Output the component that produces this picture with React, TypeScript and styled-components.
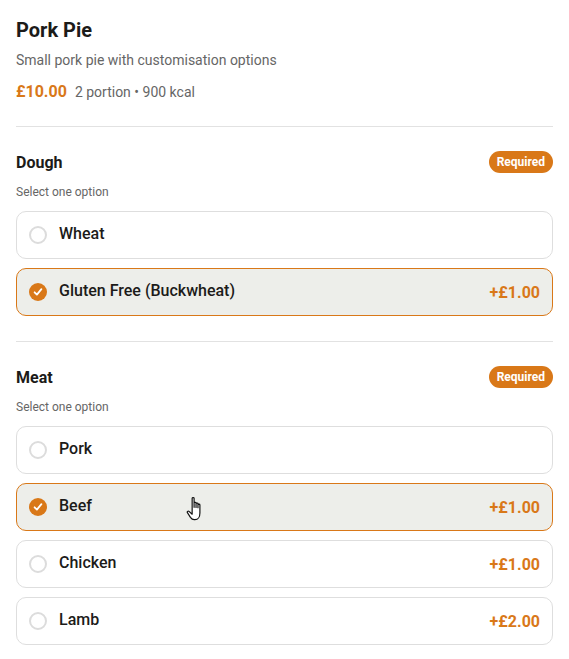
import styled, { createGlobalStyle } from "styled-components";

const GlobalStyle = createGlobalStyle`
   * { box-sizing: border-box; }
   body {
      margin: 0;
      background: #ffffff;
      font-family: Roboto, "Liberation Sans", sans-serif;
      color: #1c1b19;
   }
`;

const ORANGE = "#d97818";

const Page = styled.div`
   padding: 16px 16px 0;
`;

const Header = styled.header`
   padding-bottom: 22px;
   border-bottom: 1px solid #e2e2e2;
`;

const Title = styled.h1`
   margin: 0;
   font-size: 20px;
   line-height: 28px;
   font-weight: 700;
`;

const Subtitle = styled.p`
   margin: 6px 0 0;
   font-size: 14px;
   line-height: 20px;
   color: #666;
`;

const PriceRow = styled.div`
   margin-top: 10px;
   display: flex;
   align-items: baseline;
   gap: 8px;
   line-height: 24px;
   strong {
      font-size: 16px;
      font-weight: 700;
      color: ${ORANGE};
   }
   span {
      font-size: 14px;
      color: #666;
   }
`;

const Section = styled.section<{ $last?: boolean }>`
   padding: 24px 0 25px;
   border-bottom: ${({ $last }) => ($last ? "none" : "1px solid #e2e2e2")};
`;

const SectionHead = styled.div`
   display: flex;
   justify-content: space-between;
   align-items: center;
   height: 22px;
`;

const SectionTitle = styled.h2`
   margin: 0;
   font-size: 16px;
   font-weight: 700;
`;

const Badge = styled.span`
   background: ${ORANGE};
   color: #fff;
   font-size: 12px;
   font-weight: 700;
   line-height: 22px;
   padding: 0 8px;
   border-radius: 11px;
`;

const Hint = styled.p`
   margin: 11px 0 11px;
   font-size: 12px;
   line-height: 16px;
   color: #666;
`;

const Options = styled.div`
   display: flex;
   flex-direction: column;
   gap: 9px;
`;

const Option = styled.label<{ $selected?: boolean }>`
   position: relative;
   display: flex;
   align-items: center;
   gap: 12px;
   height: 48px;
   padding: 0 12px;
   border-radius: 10px;
   border: 1px solid ${({ $selected }) => ($selected ? ORANGE : "#dedede")};
   background: ${({ $selected }) => ($selected ? "#edeeea" : "#fff")};
   cursor: pointer;
`;

const Radio = styled.span<{ $checked?: boolean }>`
   width: 18px;
   height: 18px;
   border-radius: 50%;
   flex-shrink: 0;
   display: flex;
   align-items: center;
   justify-content: center;
   border: ${({ $checked }) => ($checked ? "none" : "2px solid #dcdcdc")};
   background: ${({ $checked }) => ($checked ? ORANGE : "#fff")};
`;

const OptionName = styled.span`
   flex: 1;
   padding-bottom: 4px;
   font-size: 16px;
   font-weight: 500;
   color: #1c1b19;
`;

const Extra = styled.span`
   font-size: 16px;
   font-weight: 700;
   color: ${ORANGE};
`;

const Pointer = styled.svg`
   position: absolute;
   left: 169px;
   top: 12px;
`;

type Choice = { name: string; extra?: string; selected?: boolean; hover?: boolean };

const groups: { title: string; choices: Choice[] }[] = [
   {
      title: "Dough",
      choices: [
         { name: "Wheat" },
         { name: "Gluten Free (Buckwheat)", extra: "+£1.00", selected: true },
      ],
   },
   {
      title: "Meat",
      choices: [
         { name: "Pork" },
         { name: "Beef", extra: "+£1.00", selected: true, hover: true },
         { name: "Chicken", extra: "+£1.00" },
         { name: "Lamb", extra: "+£2.00" },
      ],
   },
];

function HandCursor() {
   return (
      <Pointer width="22" height="28" viewBox="0 0 20 26">
         <path
            d="M5.5 2.2c0-1 1.8-1 1.8 0v8.3V6.6c0-1 1.8-1 1.8 0v4V7.3c0-1 1.8-1 1.8 0v3.6V8.3c0-1 1.8-1 1.8 0v7.4c0 3.4-1.7 6.3-4.6 6.3H7.4c-1.6 0-2.6-.9-3.5-2.2L1.1 15.5c-.6-.9.6-2 1.5-1.2l2.9 2.6Z"
            fill="#fff"
            stroke="#111"
            strokeWidth="1.1"
            strokeLinejoin="round"
         />
      </Pointer>
   );
}

function App() {
   return (
      <Page>
         <GlobalStyle />
         <Header>
            <Title>Pork Pie</Title>
            <Subtitle>Small pork pie with customisation options</Subtitle>
            <PriceRow>
               <strong>£10.00</strong>
               <span>2 portion • 900 kcal</span>
            </PriceRow>
         </Header>
         {groups.map((group, gi) => (
            <Section key={group.title} $last={gi === groups.length - 1}>
               <SectionHead>
                  <SectionTitle>{group.title}</SectionTitle>
                  <Badge>Required</Badge>
               </SectionHead>
               <Hint>Select one option</Hint>
               <Options>
                  {group.choices.map((c) => (
                     <Option key={c.name} $selected={c.selected}>
                        <Radio $checked={c.selected}>
                           {c.selected && (
                              <svg width="10" height="10" viewBox="0 0 10 10">
                                 <path
                                    d="M1.6 5.3l2.3 2.3 4.5-5.4"
                                    fill="none"
                                    stroke="#fff"
                                    strokeWidth="1.8"
                                    strokeLinecap="round"
                                    strokeLinejoin="round"
                                 />
                              </svg>
                           )}
                        </Radio>
                        <OptionName>{c.name}</OptionName>
                        {c.extra && <Extra>{c.extra}</Extra>}
                        {c.hover && <HandCursor />}
                     </Option>
                  ))}
               </Options>
            </Section>
         ))}
      </Page>
   );
}

export default App;
